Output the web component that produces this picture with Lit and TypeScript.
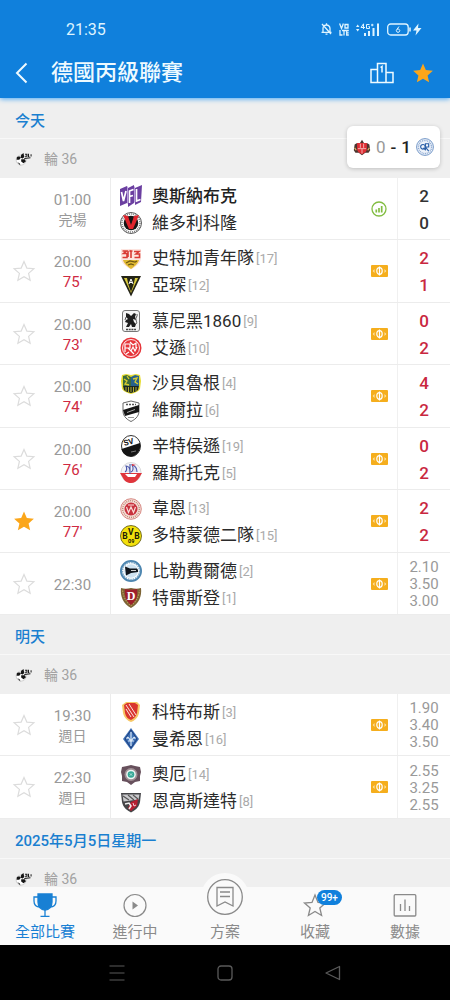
import { LitElement, html, svg, css, nothing, TemplateResult } from "lit";
import { customElement, property, state } from "lit/decorators.js";
import { classMap } from "lit/directives/class-map.js";

type Team = { name: string; rank?: number; crest: string };
type Match = {
  time: string;
  note?: string;
  minute?: number;
  starred?: boolean;
  finished?: boolean;
  home: Team;
  away: Team;
  scores?: [number, number];
  odds?: string[];
};
type Day = { title: string; round: string; matches: Match[] };

const STAR = "M12 1.6l3.1 7.2 7.7.7-5.8 5.1 1.7 7.6L12 18.2l-6.7 4 1.7-7.6-5.8-5.1 7.7-.7z";

const crests: Record<string, TemplateResult> = {
  osnabrueck: svg`
    <path d="M0 4l7-3 0 17-7 3zM8 3l6-3 0 18-6 4zM15 3l7-3-1 17-6 3z" fill="#6b3fa0"/>
    <path d="M7 1l1 1v17l-1-1zM14 1l1 1v16l-1-1z" fill="#b79ddb"/>
    <path d="M1.500 7l2 9 2.500-10M9.500 18V6l4-1.500M9.500 11.500l3.500-1M16.500 4v12l4-1.500" fill="none" stroke="#fff" stroke-width="1.700"/>`,
  koeln: svg`
    <circle cx="11" cy="11" r="10.500" fill="#fff" stroke="#333" stroke-width=".8"/>
    <circle cx="11" cy="11" r="9" fill="none" stroke="#777" stroke-width="1.500" stroke-dasharray="1 1"/>
    <circle cx="11" cy="11" r="7.300" fill="#151515"/>
    <path d="M3 3l5 1 3 9 3-9 5-1-6 14h-4z" fill="#e0242c"/>
    <path d="M9 6h4l-2 5z" fill="#151515"/>`,
  stuttgart: svg`
    <path d="M1 1h20v9c0 6-6 9-10 11.500C7 19 1 16 1 10z" fill="#fde4df"/>
    <path d="M2.500 3h4l-3 2.500h3.500v4H2.500M9.500 2.500l1.500 1v6.500M12.500 3h-2M14 3.500h5l-3 2.500h3.500v3.500h-5M8 3v6" fill="none" stroke="#d93a35" stroke-width="1.600"/>
    <path d="M3 12h16c-1 4-5 7-8 9-3-2-7-5-8-9z" fill="#e0b932"/>
    <path d="M6 15l4-2 5 1 2-1M8 17l3-1 3 1" fill="none" stroke="#6f5712" stroke-width="1.200"/>`,
  aachen: svg`
    <path d="M1 1h20L11 21.500z" fill="#232316"/>
    <path d="M4 3h14l-7 15z" fill="#d9cb3e"/>
    <path d="M7 3h8l-1.500 7-2.500 7-2.500-7z" fill="#232316"/>
    <path d="M9 9l2-5 2 5M9.700 7.500h2.600" fill="none" stroke="#fff" stroke-width="1"/>`,
  muenchen: svg`
    <rect x="2.500" y=".5" width="17" height="21" rx="2.500" fill="#f4f4f4" stroke="#777"/>
    <path d="M6 3l3 1 2 2 3-3 2 1-1 3 1 3-3-1 1 3 2 2-1 3h-3l-1-3-2 3H6l2-4-3-1 1-2 2-1-2-2z" fill="#1d1d1d"/>
    <path d="M17 4c1 3-2 3-1 6s1 3 0 4M6 7l-1 3" fill="none" stroke="#444" stroke-width=".9"/>
    <path d="M6 19.500h10" stroke="#444" stroke-width="1.500" stroke-dasharray="2 .7"/>`,
  essen: svg`
    <circle cx="11" cy="11" r="10.500" fill="#e6353a"/>
    <circle cx="11" cy="11" r="8.500" fill="none" stroke="#fff" stroke-width=".9"/>
    <path d="M5 15V7h5v4H5M8 11l6 6M10 5l3 3 3-2v5M11 14l2-4 2 4 2-4M6 17l3-2" fill="none" stroke="#fff" stroke-width="1.200"/>`,
  saarbruecken: svg`
    <path d="M2 2l4-1 5 1 5-1 4 1 1 6-1 8c-2 3-6 4-9 5-3-1-7-2-9-5L1 8z" fill="#e6dc30"/>
    <path d="M3 3l4-1 4 2v9H3z" fill="#3c6a3b"/><path d="M11 4l4-2 4 1v10h-8z" fill="#27618c"/>
    <path d="M4 6l3 2-2 3 4 1M13 6l4-1-2 4 3 2M7 3l2 3" fill="none" stroke="#d9cc30" stroke-width="1.300"/>
    <path d="M3 13h16l-1 4c-2 2-5 2-7 3-2-1-5-1-7-3z" fill="#1b2723"/>
    <path d="M6 14v4M8.500 14v5M11 14v5M13.500 14v5M16 14v4" stroke="#d9cc30" stroke-width=".8"/>`,
  verl: svg`
    <path d="M3 3l8-2 8 2v8c0 6-5 9-8 10.500C8 20 3 17 3 11z" fill="#fff" stroke="#555" stroke-width=".9"/>
    <path d="M3 10l16-5v7L5 16z" fill="#161616"/>
    <path d="M7 12.500l8-3" stroke="#aaa" stroke-width="1"/>
    <path d="M6 4.500h10" stroke="#555" stroke-width="1.500" stroke-dasharray="2 1"/>
    <path d="M8 17.500h6" stroke="#999" stroke-width="1"/>`,
  sandhausen: svg`
    <ellipse cx="11" cy="11" rx="9.500" ry="10.500" fill="#fff" stroke="#333" stroke-width="1"/>
    <path d="M1.500 14l18.500-6c1.500 8-4 13.500-9 13.500S2 18 1.500 14z" fill="#151515"/>
    <text x="4.500" y="9.500" font-size="8" font-weight="700" font-family="Roboto" transform="rotate(-16 10 10)" fill="#151515">SV</text>
    <path d="M11 17l5-1" stroke="#777" stroke-width="1"/>`,
  rostock: svg`
    <circle cx="11" cy="10.500" r="10" fill="#f4f4f8" stroke="#ccc" stroke-width=".7"/>
    <path d="M0 11h22l-3 5c-2 3-5 5-8 5s-7-2-8-5z" fill="#e0353c"/>
    <path d="M5 10c2-1 2-4 1-6 3 0 4 2 4 6M11 10c2-1 3-4 1-7 4 1 5 3 5 7M10 2v10" fill="#dfe2f3" stroke="#4956a8" stroke-width="1.100"/>
    <path d="M5 12h12l-2 3H8z" fill="#fff"/>
    <path d="M12 2l4 1-4 1z" fill="#e0353c"/>`,
  wehen: svg`
    <circle cx="11" cy="11" r="10.300" fill="#f6ddd7" stroke="#d78b85" stroke-width="1"/>
    <circle cx="11" cy="11" r="8.300" fill="none" stroke="#b98a71" stroke-width="1.300" stroke-dasharray="1 1"/>
    <circle cx="11" cy="11" r="6.500" fill="#c8323d"/>
    <path d="M6.500 9l2 5.500L11 9l2.500 5.500 2-5.500M8 7h6" fill="none" stroke="#fbdcd8" stroke-width="1.200"/>`,
  dortmund: svg`
    <circle cx="11" cy="11" r="10.500" fill="#f3e00c" stroke="#55500a" stroke-width=".8"/>
    <text x="2.300" y="13.700" font-size="8.500" font-weight="700" font-family="Roboto" fill="#1a1a05">B</text>
    <text x="8.100" y="10" font-size="8.500" font-weight="700" font-family="Roboto" fill="#1a1a05">V</text>
    <text x="14.200" y="13.700" font-size="8.500" font-weight="700" font-family="Roboto" fill="#1a1a05">B</text>
    <text x="8" y="18.300" font-size="5.500" font-weight="700" font-family="Roboto" fill="#1a1a05">09</text>`,
  bielefeld: svg`
    <circle cx="11" cy="11" r="10" fill="#fff" stroke="#4d86b0" stroke-width="2"/>
    <circle cx="11" cy="11" r="8.500" fill="none" stroke="#7fa9c8" stroke-width="1.500" stroke-dasharray="1.500 1"/>
    <circle cx="11" cy="11" r="6.800" fill="#cfe3f1"/>
    <path d="M5 6.500l5 2h7l1 1.500v2l-7 1-5 2.500z" fill="#11161c"/>
    <path d="M11 10.500h5" stroke="#fff" stroke-width=".8"/>`,
  dresden: svg`
    <path d="M11 1c4 1 7 1 10 0 1 8-2 16-10 20C3 17 0 9 1 1c3 1 6 1 10 0z" fill="#7c6335"/>
    <path d="M2.500 3.500c1 6 3 11 8.500 15 5.500-4 7.500-9 8.500-15" fill="none" stroke="#b89b56" stroke-width="1.200" stroke-dasharray="1.500 1"/>
    <path d="M5 2c4 1 8 1 12 0 1 7-1 12-6 16C6 14 4 9 5 2z" fill="#9e1f2b"/>
    <text x="6.800" y="12.500" font-size="12" font-weight="700" font-family="Liberation Serif" fill="#fff">D</text>`,
  cottbus: svg`
    <path d="M2 4l4-3h11l3 3-1 8c-1 5-5 8-8 9-3-1-7-4-8-9z" fill="#f7c766"/>
    <path d="M4 4l3-2h8l3 2-1 8c-1 4-4 6-6 7-3-1-5-3-6-7z" fill="#d9352e"/>
    <path d="M6 4l8 12M9 3l7 11M6 8l5 8" fill="none" stroke="#fbe3df" stroke-width="1"/>`,
  mannheim: svg`
    <path d="M11 0l8 11-8 11L3 11z" fill="#3d6fb5"/>
    <path d="M11 2l6 9-6 9-6-9z" fill="none" stroke="#1e3f7c" stroke-width="1"/>
    <path d="M11 4v14M7 11c0-3 2-2 4 3 2-5 4-6 4-3M8 13h6" fill="none" stroke="#d9e8f7" stroke-width="1.200"/>`,
  aue: svg`
    <path d="M2 3l5-1 4-1 4 1 5 1 1 5-1 4 0 5-5 1-4 3-4-3-5-1 0-5-1-4z" fill="#67505c"/>
    <circle cx="11" cy="10.500" r="6.500" fill="#a08f95"/>
    <circle cx="11" cy="10.500" r="4.800" fill="#eef7f5"/>
    <circle cx="11" cy="10.500" r="3.300" fill="#35a796"/>
    <path d="M9.800 9.300l2.400 2.400M12.200 9.300l-2.400 2.400" stroke="#c9ece6" stroke-width=".8"/>`,
  ingolstadt: svg`
    <path d="M1 2h20l-1 9c-1 6-6 9-9 10.500C8 20 3 17 2 11z" fill="#454548"/>
    <path d="M2.500 3.500h17l-1 5-15 2z" fill="#c9c9cc"/>
    <path d="M3 5l6 4M8 4l6 5M13 4l5 4" stroke="#555" stroke-width="1.200"/>
    <path d="M11 11l7-3-1 7-6 5-3-3z" fill="#b61e31"/>
    <path d="M5 13l4-1 2 3-2 3" fill="none" stroke="#eee" stroke-width="1.500"/>
    <path d="M13 12l1 3 2-1" fill="none" stroke="#f3cdd2" stroke-width="1"/>`,
  sunderland: svg`
    <path d="M2 8l3-2 3 1 3-5 3 5 3-1 3 2 1 7-2 3h-4l-4 3-4-3H3l-2-3z" fill="#4a342f"/>
    <path d="M5 6h12v7c0 4-3 5-6 7-3-2-6-3-6-7z" fill="#dd2f35"/>
    <path d="M9 7v5M13 7v5M6 13h10M11 13v6" stroke="#f8c9c7" stroke-width="1"/>
    <path d="M2 12l2 3M20 12l-2 3" stroke="#e0b46a" stroke-width="1.500"/>`,
  qpr: svg`
    <circle cx="11" cy="11" r="10.300" fill="#eef3fa" stroke="#5b84bd" stroke-width="1"/>
    <circle cx="11" cy="11" r="8" fill="none" stroke="#8eaad3" stroke-width="1.700" stroke-dasharray="1.200 1"/>
    <path d="M9 8a2.800 2.800 0 1 0 0 5.500A2.800 2.800 0 0 0 9 8M9 12l3 3M11.500 15V7h4v4h-4l4 5" fill="none" stroke="#2b5fa8" stroke-width="1.400"/>`,
  liga: svg`
    <circle cx="8" cy="13" r="6.500" fill="#fff" stroke="#bbb" stroke-width=".8"/>
    <path d="M2.500 9l3-1 2 2-2 2.500H2zM8 12l5 0 1 3-3 2-3-2zM3 16l3 1 1 3z" fill="#161616"/>
    <path d="M8 6l3-2 1 5-2 2-3-1z" fill="#161616"/>
    <path d="M13 5.500h2.500v2.500H13M17.500 5v3.500h1M20.800 5.500v3M12 11l8-1" fill="none" stroke="#161616" stroke-width="1.300"/>`,
};

const crest = (id: string, label: string) =>
  html`<svg class="crest" viewBox="0 0 22 22" role="img" aria-label=${label}>${crests[id]}</svg>`;

const days: Day[] = [
  {
    title: "今天",
    round: "輪 36",
    matches: [
      {
        time: "01:00", note: "完場", finished: true, scores: [2, 0],
        home: { name: "奧斯納布克", crest: "osnabrueck" },
        away: { name: "維多利科隆", crest: "koeln" },
      },
      {
        time: "20:00", minute: 75, scores: [2, 1],
        home: { name: "史特加青年隊", rank: 17, crest: "stuttgart" },
        away: { name: "亞琛", rank: 12, crest: "aachen" },
      },
      {
        time: "20:00", minute: 73, scores: [0, 2],
        home: { name: "慕尼黑1860", rank: 9, crest: "muenchen" },
        away: { name: "艾遜", rank: 10, crest: "essen" },
      },
      {
        time: "20:00", minute: 74, scores: [4, 2],
        home: { name: "沙貝魯根", rank: 4, crest: "saarbruecken" },
        away: { name: "維爾拉", rank: 6, crest: "verl" },
      },
      {
        time: "20:00", minute: 76, scores: [0, 2],
        home: { name: "辛特侯遜", rank: 19, crest: "sandhausen" },
        away: { name: "羅斯托克", rank: 5, crest: "rostock" },
      },
      {
        time: "20:00", minute: 77, starred: true, scores: [2, 2],
        home: { name: "韋恩", rank: 13, crest: "wehen" },
        away: { name: "多特蒙德二隊", rank: 15, crest: "dortmund" },
      },
      {
        time: "22:30", odds: ["2.10", "3.50", "3.00"],
        home: { name: "比勒費爾德", rank: 2, crest: "bielefeld" },
        away: { name: "特雷斯登", rank: 1, crest: "dresden" },
      },
    ],
  },
  {
    title: "明天",
    round: "輪 36",
    matches: [
      {
        time: "19:30", note: "週日", odds: ["1.90", "3.40", "3.50"],
        home: { name: "科特布斯", rank: 3, crest: "cottbus" },
        away: { name: "曼希恩", rank: 16, crest: "mannheim" },
      },
      {
        time: "22:30", note: "週日", odds: ["2.55", "3.25", "2.55"],
        home: { name: "奧厄", rank: 14, crest: "aue" },
        away: { name: "恩高斯達特", rank: 8, crest: "ingolstadt" },
      },
    ],
  },
  { title: "2025年5月5日星期一", round: "輪 36", matches: [] },
];

const reset = css`
  * { box-sizing: border-box; }
  button {
    margin: 0;
    padding: 0;
    border: 0;
    background: none;
    color: inherit;
    font: inherit;
    cursor: pointer;
  }
  svg { display: block; flex: none; overflow: visible; }
`;

@customElement("status-bar")
class StatusBar extends LitElement {
  static styles = [reset, css`
    :host {
      display: flex;
      align-items: center;
      justify-content: space-between;
      height: 48px;
      padding: 10px 28px 0 66px;
      color: #dff4ff;
      font-size: 16px;
    }
    .icons { display: flex; align-items: center; gap: 7px; }
  `];

  render() {
    return html`
      <time>21:35</time>
      <div class="icons">
        <svg width="11" height="12" viewBox="0 0 11 12" fill="none" stroke="currentColor" stroke-width="1.300">
          <path d="M2 9V5.500a3.500 3.500 0 0 1 7 0V9M.5 9.300h10M4.500 11.200h2M5.500 .3v1.500M1 1l9 10"/>
        </svg>
        <svg width="10" height="13" viewBox="0 0 10 13" fill="none" stroke="currentColor" stroke-width="1.300">
          <path d="M.6.500L2.500 5.500 4.400.5M6 1.500h3v3.500H6zM1 7v5h2.500M3 7.500h4M5 7.500V12.500M9.800 7.500H7.700v4.500h2.100M7.700 9.800h2"/>
        </svg>
        <svg width="24" height="13" viewBox="0 0 24 13" fill="currentColor">
          <path d="M0 4l1.700-2.500L3.400 4zM0 6l1.700 2.500L3.400 6zM8 10h2v3H8zM12 8h2v5h-2zM16.500 5h2v8h-2zM21 .5h2V13h-2z"/>
          <path d="M7.500 6V.8L5 4.500h4M13.500 1.500h-3v4h3v-2h-1M15 2h2.500M16.200 .8v2.500" fill="none" stroke="currentColor"/>
        </svg>
        <svg width="35" height="13" viewBox="0 0 35 13" fill="none" stroke="currentColor">
          <rect x=".7" y="1" width="20.500" height="11" rx="3" stroke-width="1.300"/>
          <path d="M23 4.500v4" stroke-width="1.600"/>
          <path d="M12 3.500L9.800 6.500a1.700 1.700 0 1 0 2.500 0 1.700 1.700 0 0 0-2.500 0"/>
          <path d="M31.500 .5l-5.500 7h3.500l-1 5 6-7.500H31z" fill="currentColor" stroke="none"/>
        </svg>
      </div>
    `;
  }
}

@customElement("match-row")
class MatchRow extends LitElement {
  @property({ attribute: false }) match!: Match;
  @state() private starred?: boolean;

  static styles = [reset, css`
    :host {
      display: grid;
      grid-template-columns: 48px 63px minmax(0, 1fr) 36px 53px;
      border-bottom: 1px solid #ececec;
      background: #fff;
    }
    .star { display: grid; place-items: center; color: #dcdcdc; }
    .star.on { color: #fba61a; }
    .when {
      display: flex;
      flex-direction: column;
      align-items: center;
      justify-content: center;
      padding: 2px 13px 0 0;
      border-right: 1px solid #ececec;
      color: #999;
      font-size: 15px;
      line-height: 20px;
    }
    .note { font-size: 14px; }
    .minute { color: #cf2a42; }
    .teams, .scores {
      display: flex;
      flex-direction: column;
      justify-content: center;
      padding-top: 2px;
      line-height: 27px;
    }
    .teams { padding-left: 9px; font-size: 17px; color: #2b2b2b; }
    .team { display: flex; align-items: center; white-space: nowrap; }
    .crest { width: 22px; height: 22px; margin-right: 10px; }
    .winner { font-weight: 500; color: #222; }
    .rank { margin-left: 2px; color: #aaa; font-size: 13px; }
    .info { display: grid; place-items: center; }
    .scores {
      align-items: center;
      border-left: 1px solid #f0f0f0;
      color: #c9283f;
      font-size: 17px;
      font-weight: 500;
    }
    .scores.final { color: #333; }
    .scores.odds { color: #999; font-size: 15px; font-weight: 400; line-height: 17px; }
  `];

  private team(t: Team, winner = false) {
    return html`
      <div class="team">
        ${crest(t.crest, t.name)}
        <span class=${classMap({ winner })}>${t.name}</span>
        ${t.rank ? html`<span class="rank">[${t.rank}]</span>` : nothing}
      </div>`;
  }

  render() {
    const m = this.match;
    const on = this.starred ?? !!m.starred;
    return html`
      ${m.finished
        ? html`<span></span>`
        : html`
          <button class=${classMap({ star: true, on })} aria-label="收藏" aria-pressed=${on}
            @click=${() => (this.starred = !on)}>
            <svg width="22" height="22" viewBox="0 0 24 24" fill=${on ? "currentColor" : "none"}
              stroke="currentColor" stroke-width=${on ? 0 : 1.3}><path d=${STAR}/></svg>
          </button>`}
      <div class="when">
        <time>${m.time}</time>
        ${m.note ? html`<span class="note">${m.note}</span>` : nothing}
        ${m.minute ? html`<span class="minute">${m.minute}'</span>` : nothing}
      </div>
      <div class="teams">${this.team(m.home, m.finished)}${this.team(m.away)}</div>
      <div class="info">
        ${m.finished
          ? html`
            <svg width="16" height="16" viewBox="0 0 16 16" fill="none" stroke="#82bd42">
              <circle cx="8" cy="8" r="7" stroke-width="1.300"/>
              <path d="M5.300 8.500v3M8 7v4.500M10.700 5v6.500" stroke-width="1.700"/>
            </svg>`
          : html`
            <svg width="17" height="12" viewBox="0 0 17 12">
              <rect width="17" height="12" rx="1" fill="#f5ae1d"/>
              <ellipse cx="8.500" cy="6" rx="2.700" ry="3.300" fill="none" stroke="#fff" stroke-width="1.200"/>
              <path d="M8.500 1.500v9" stroke="#fff" stroke-width="1.200"/>
              <path d="M3.500 4L1.700 6l1.800 2zM13.500 4l1.800 2-1.800 2z" fill="#fde3ae"/>
            </svg>`}
      </div>
      ${m.scores
        ? html`<div class=${classMap({ scores: true, final: !!m.finished })}>
            ${m.scores.map((s) => html`<span>${s}</span>`)}</div>`
        : html`<div class="scores odds">${m.odds!.map((o) => html`<span>${o}</span>`)}</div>`}
    `;
  }
}

@customElement("tab-bar")
class TabBar extends LitElement {
  @state() private active = 0;

  static styles = [reset, css`
    :host { position: relative; display: block; background: #fafafa; }
    nav { display: grid; grid-template-columns: repeat(5, 1fr); height: 58px; }
    .tab {
      position: relative;
      display: flex;
      flex-direction: column;
      align-items: center;
      padding-top: 6px;
      color: #8a8a8a;
      font-size: 15px;
      line-height: 20px;
    }
    .tab.active { color: #1880d4; }
    .icon { position: relative; height: 24px; margin-bottom: 5px; }
    .raised {
      position: absolute;
      top: -14px;
      left: 50%;
      display: grid;
      place-items: center;
      width: 48px;
      height: 48px;
      margin-left: -24px;
      border-radius: 50%;
      background: #fafafa;
    }
    .spacer { height: 29px; }
    .label { position: relative; }
    .badge {
      position: absolute;
      top: -3px;
      left: 14px;
      padding: 0 4px;
      border-radius: 8px;
      background: #1080dc;
      color: #fff;
      font-size: 10px;
      font-weight: 500;
      line-height: 15px;
    }
  `];

  private icons = [
    html`<svg width="24" height="24" viewBox="0 0 24 24" fill="none" stroke="currentColor" stroke-width="1.300">
      <path d="M5 1h14v8c0 5-3 8-7 8s-7-3-7-8z" fill="currentColor"/>
      <path d="M5 4H1v4c0 4 2 6 6 6M19 4h4v4c0 4-2 6-6 6M12 17v6M7.500 23.300h9"/></svg>`,
    html`<svg width="24" height="24" viewBox="0 0 24 24" fill="none" stroke="currentColor" stroke-width="1.200">
      <circle cx="12" cy="12.500" r="11"/><path d="M9.500 8.500v8l5.500-4z" fill="currentColor" stroke="none"/></svg>`,
    html`<svg width="36" height="36" viewBox="0 0 36 36" fill="none" stroke="currentColor" stroke-width="1.300">
      <circle cx="18" cy="18" r="17.300"/>
      <path d="M10 8.500h16v18.500l-8-4-8 4zM13 13h10M13 17.500h10"/></svg>`,
    html`<svg width="24" height="24" viewBox="0 0 24 24" fill="none" stroke="currentColor" stroke-width="1.300">
      <path d="M12 2l3 7.400 7.500.600-5.700 5 1.800 7.500-6.600-4-6.600 4L7.200 15 1.500 10 9 9.400z"/></svg>`,
    html`<svg width="24" height="24" viewBox="0 0 24 24" fill="none" stroke="currentColor" stroke-width="1.300">
      <rect x="1.200" y="1.700" width="21.600" height="21.300" rx="1"/>
      <path d="M7.500 11V18M12 6.500V18M16.500 13V18"/></svg>`,
  ];

  render() {
    return html`<nav>
      ${["全部比賽", "進行中", "方案", "收藏", "數據"].map((label, i) => html`
        <button class=${classMap({ tab: true, active: this.active === i })} @click=${() => (this.active = i)}>
          ${label === "方案"
            ? html`<span class="raised">${this.icons[i]}</span><span class="spacer"></span>`
            : html`<span class="icon">${this.icons[i]}
                ${label === "收藏" ? html`<span class="badge">99+</span>` : nothing}</span>`}
          <span class="label">${label}</span>
        </button>`)}
    </nav>`;
  }
}

@customElement("app-root")
class AppRoot extends LitElement {
  static styles = [reset, css`
    :host {
      display: flex;
      flex-direction: column;
      height: 100vh;
      background: #efefef;
      font-family: Roboto, "Noto Sans CJK TC", sans-serif;
    }
    .top {
      position: relative;
      z-index: 1;
      background: #1080dc;
      box-shadow: 0 1px 5px #4aa8f4;
    }
    .bar {
      display: flex;
      align-items: center;
      height: 50px;
      padding: 0 16px 0 14px;
      color: #eefaff;
    }
    h1 {
      flex: 1;
      margin: 0 0 0 21px;
      font-size: 22px;
      font-weight: 500;
      line-height: 30px;
    }
    .actions { display: flex; align-items: center; gap: 18px; }
    .gold { color: #fba61a; }
    .body { position: relative; flex: 1; min-height: 0; display: flex; flex-direction: column; }
    main { flex: 1; min-height: 0; overflow-y: auto; scrollbar-width: none; padding-top: 1px; }
    h2 {
      display: flex;
      align-items: center;
      height: 40px;
      margin: 0;
      padding: 2px 0 0 15px;
      border-bottom: 1px solid #f8f8f8;
      color: #1a7fd0;
      font-size: 15px;
      font-weight: 500;
    }
    .round {
      display: flex;
      align-items: center;
      gap: 12px;
      height: 39px;
      padding: 0 0 1px 15px;
      color: #a2a2a2;
      font-size: 14px;
    }
    .crest { width: 17px; height: 17px; }
    .matches { display: grid; grid-auto-rows: minmax(62px, auto) minmax(63px, auto); }
    .chip {
      position: absolute;
      top: 28px;
      right: 10px;
      display: flex;
      align-items: center;
      gap: 5px;
      height: 42px;
      padding: 0 6px;
      border-radius: 6px;
      background: #fff;
      box-shadow: 0 1px 4px #0003;
      color: #222;
      font-size: 17px;
      font-weight: 500;
    }
    .chip .crest { width: 18px; height: 18px; }
    .behind { color: #999; font-weight: 400; }
    .system {
      display: flex;
      align-items: center;
      justify-content: center;
      gap: 90px;
      height: 55px;
      background: #000;
      color: #5a5a5a;
    }
  `];

  render() {
    return html`
      <header class="top">
        <status-bar></status-bar>
        <div class="bar">
          <button aria-label="返回">
            <svg width="16" height="20" viewBox="0 0 16 20" fill="none" stroke="currentColor" stroke-width="2">
              <path d="M12.500 .5L3 10l9.500 9.500"/></svg>
          </button>
          <h1>德國丙級聯賽</h1>
          <div class="actions">
            <button aria-label="排名">
              <svg width="24" height="22" viewBox="0 0 24 22" fill="none" stroke="currentColor" stroke-width="1.500">
                <path d="M7.500 20.500V1.500h8.500v19M7.500 7.500H1v13h22V10.500h-7M10.500 5.500l1.500-1v6"/></svg>
            </button>
            <button class="gold" aria-label="收藏聯賽">
              <svg width="22" height="22" viewBox="0 0 24 24" fill="currentColor"><path d=${STAR}/></svg>
            </button>
          </div>
        </div>
      </header>
      <div class="body">
        <main>
          ${days.map((d) => html`
            <section>
              <h2>${d.title}</h2>
              <div class="round">${crest("liga", d.title)}<span>${d.round}</span></div>
              <div class="matches">
                ${d.matches.map((m) => html`<match-row .match=${m}></match-row>`)}
              </div>
            </section>`)}
        </main>
        <button class="chip">
          ${crest("sunderland", "主隊")}
          <span class="behind">0</span><span>-</span><span>1</span>
          ${crest("qpr", "客隊")}
        </button>
      </div>
      <tab-bar></tab-bar>
      <footer class="system">
        <button aria-label="選單">
          <svg width="18" height="18" viewBox="0 0 18 18" stroke="currentColor" stroke-width="1.200">
            <path d="M1.500 2h15M1.500 9h15M1.500 16h15"/></svg>
        </button>
        <button aria-label="主畫面">
          <svg width="18" height="18" viewBox="0 0 18 18" fill="none" stroke="currentColor" stroke-width="1.300">
            <rect x="2" y="2" width="14" height="14" rx="3"/></svg>
        </button>
        <button aria-label="上一頁">
          <svg width="18" height="18" viewBox="0 0 18 18" fill="none" stroke="currentColor" stroke-width="1.300" stroke-linejoin="round">
            <path d="M15.500 2.500v13L2 9z"/></svg>
        </button>
      </footer>
    `;
  }
}
